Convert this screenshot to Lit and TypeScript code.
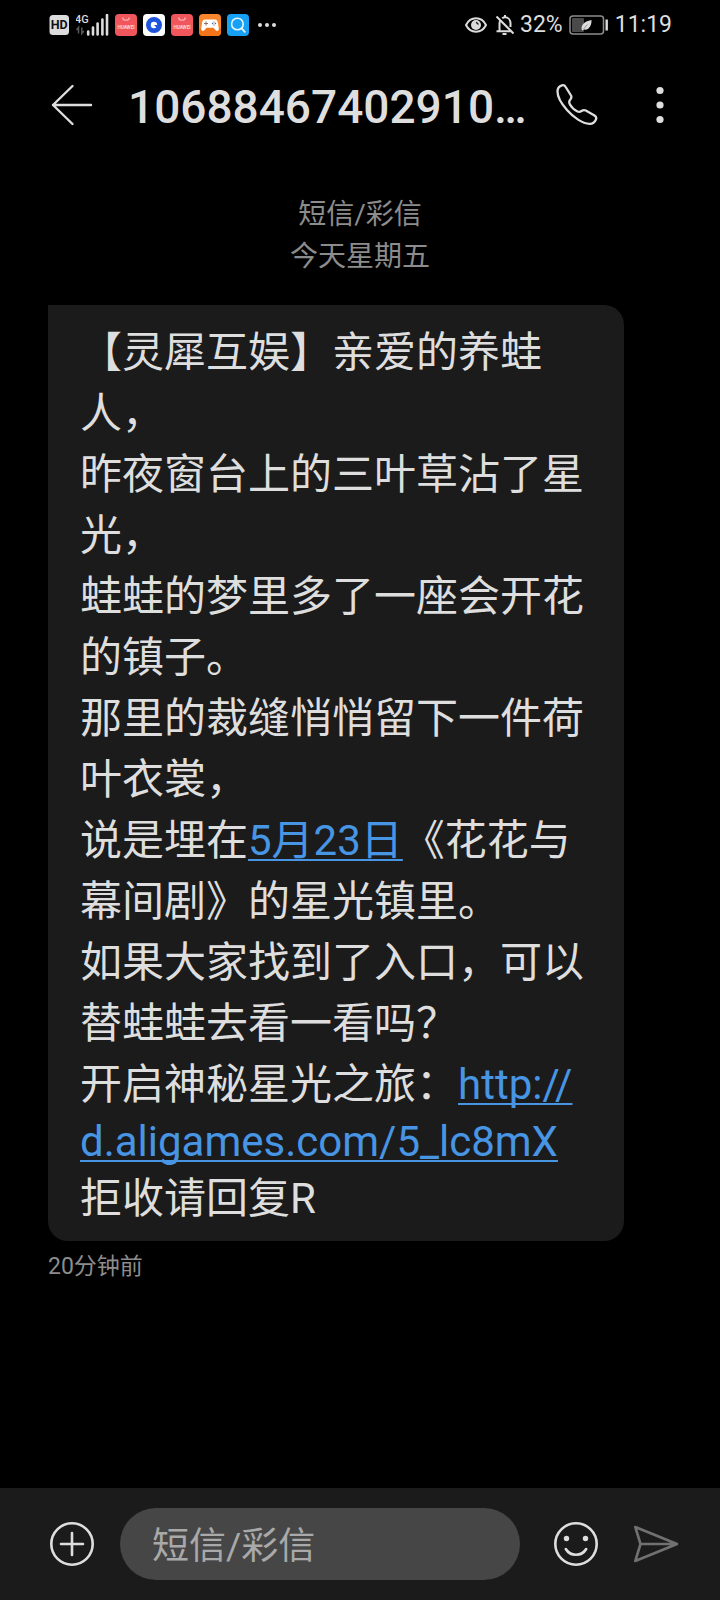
import { LitElement, html, css, svg } from "lit";
import { customElement } from "lit/decorators.js";

const storeIcon = svg`
  <rect width="22" height="22" rx="4" fill="#f0565c"></rect>
  <path d="M7.500 3.500a3.600 3.600 0 0 0 7 0" fill="none" stroke="#ffb3b0" stroke-width="1.200"></path>
  <text x="11" y="14.500" text-anchor="middle" font-size="4.600" font-weight="700" fill="#ffd6d4">HUAWEI</text>`;

const browserIcon = svg`
  <rect width="22" height="22" rx="4" fill="#fff"></rect>
  <circle cx="11" cy="11" r="5.600" fill="none" stroke="#1f55dd" stroke-width="4.800"></circle>
  <path d="M11 11h3.400v3.400z" fill="#1f55dd"></path>`;

const gameIcon = svg`
  <rect width="22" height="22" rx="4" fill="#f8862c"></rect>
  <path d="M0 14h22v4a4 4 0 0 1-4 4H4a4 4 0 0 1-4-4z" fill="#f4741a"></path>
  <path d="M6 5.500h10c2 0 2.600 1.400 3 4l.8 5c.3 2.600-2 3.200-3.400 1.600l-2-2.400H7.600l-2 2.400c-1.400 1.600-3.700 1-3.400-1.600l.8-5c.4-2.600 1-4 3-4z" fill="#fff"></path>
  <path d="M5 9.500h4M7 7.500v4" stroke="#8a7466" stroke-width="1"></path>
  <circle cx="13.600" cy="9.500" r=".8" fill="#3a6fb0"></circle>
  <circle cx="16.400" cy="9.500" r=".8" fill="#c04a3a"></circle>
  <circle cx="15" cy="8.100" r=".7" fill="#8a7466"></circle>
  <circle cx="15" cy="10.900" r=".7" fill="#8a7466"></circle>`;

const searchIcon = svg`
  <rect width="22" height="22" rx="4" fill="#18a0f4"></rect>
  <circle cx="10.400" cy="10" r="5.800" fill="none" stroke="#e4f5ff" stroke-width="1.600"></circle>
  <path d="M14.600 14.400l3.200 3.400" stroke="#e4f5ff" stroke-width="1.800" stroke-linecap="round"></path>`;

const notificationIcons = [storeIcon, browserIcon, storeIcon, gameIcon, searchIcon];

@customElement("status-bar")
class StatusBar extends LitElement {
  static styles = css`
    :host {
      display: flex;
      justify-content: space-between;
      align-items: center;
      height: 50px;
      padding: 0 48px;
      color: #dedede;
      font-size: 23px;
      line-height: 28px;
    }
    svg {
      display: block;
      flex: none;
      font-family: Roboto, sans-serif;
    }
    .side {
      display: flex;
      align-items: center;
    }
    .apps {
      display: flex;
      gap: 6px;
      margin: 0 8px 0 6px;
    }
    .signal {
      margin-left: 6px;
    }
    .bell {
      margin-left: 8px;
    }
    .percent {
      margin-left: 5px;
    }
    .battery {
      margin: 0 6px;
    }
  `;

  render() {
    return html`
      <div class="side">
        <svg width="22" height="22" viewBox="0 0 22 22">
          <rect x="1.500" y="1" width="19.500" height="20" rx="3.500" fill="#dcdcdc"></rect>
          <text x="11.200" y="15.400" text-anchor="middle" font-size="12.500" font-weight="700" fill="#111">HD</text>
        </svg>
        <svg class="signal" width="33" height="22" viewBox="0 0 33 22">
          <text x="-1" y="9" font-size="11" font-weight="500" fill="#dcdcdc">4G</text>
          <path d="M2.500 19.500v-6l-2 2.400M5.800 13.500v6l2-2.400" fill="none" stroke="#555" stroke-width="1.600"></path>
          <path d="M12.200 20.500v-3M17 20.500v-7M21.600 20.500v-11M26.400 20.500v-15M31 20.500V1" stroke="#dcdcdc" stroke-width="2.600" stroke-linecap="round"></path>
        </svg>
        <div class="apps">
          ${notificationIcons.map(
            (icon) => html`<svg width="22" height="22" viewBox="0 0 22 22">${icon}</svg>`
          )}
        </div>
        <svg width="20" height="6" viewBox="0 0 20 6" fill="#dcdcdc">
          <circle cx="3" cy="3" r="2"></circle>
          <circle cx="10" cy="3" r="2"></circle>
          <circle cx="17" cy="3" r="2"></circle>
        </svg>
      </div>
      <div class="side">
        <svg width="22" height="22" viewBox="0 0 22 22">
          <path d="M1 11c4.500-9 15.500-9 20 0c-4.500 9-15.500 9-20 0z" fill="none" stroke="#dcdcdc" stroke-width="2"></path>
          <circle cx="11" cy="11" r="5" fill="#dcdcdc"></circle>
          <path d="M11.500 8.500l1.500 1.500" stroke="#222" stroke-width="1.400" stroke-linecap="round"></path>
        </svg>
        <svg class="bell" width="20" height="22" viewBox="0 0 20 22">
          <path d="M4.500 17V9.500c0-1.300.4-2.400 1-3.300M7.200 4.300C8 3.700 9 3.300 10 3.300c3.200 0 5.500 2.700 5.500 6V13M10 3.300V1M1.500 17.300h14" fill="none" stroke="#dcdcdc" stroke-width="2"></path>
          <path d="M7.500 20h4" stroke="#dcdcdc" stroke-width="2"></path>
          <path d="M1.500 2.500L18.500 19.500" stroke="#dcdcdc" stroke-width="2"></path>
        </svg>
        <span class="percent">32%</span>
        <svg class="battery" width="40" height="20" viewBox="0 0 40 20">
          <rect x="1" y="1" width="33.500" height="18" rx="3" fill="none" stroke="#8c8c8c" stroke-width="1.500"></rect>
          <rect x="3" y="3" width="12" height="14" rx="1" fill="#4a4a4a"></rect>
          <path d="M13 15.500c-1.500-5 1.500-9 9.500-10.500c.3 6-3 10.500-7.500 9.500z" fill="#dcdcdc"></path>
          <path d="M14.500 14l4-4.500" stroke="#777" stroke-width=".7"></path>
          <path d="M37.700 4.500v11" stroke="#dcdcdc" stroke-width="2.400"></path>
        </svg>
        <span>11:19</span>
      </div>
    `;
  }
}

@customElement("chat-header")
class ChatHeader extends LitElement {
  static styles = css`
    :host {
      display: flex;
      align-items: center;
      height: 110px;
      padding: 0 40px 0 50px;
      color: #dedede;
    }
    button {
      display: block;
      flex: none;
      padding: 0;
      border: 0;
      background: none;
      color: inherit;
    }
    svg {
      display: block;
    }
    .title {
      flex: 1;
      min-width: 0;
      margin: 0 24px 0 34px;
      padding-top: 4px;
      overflow: hidden;
      white-space: nowrap;
      font-size: 46px;
      line-height: 56px;
      font-weight: 500;
    }
    .more {
      margin-left: 42px;
    }
  `;

  render() {
    return html`
      <button aria-label="返回">
        <svg width="44" height="44" viewBox="0 0 44 44" fill="none" stroke="currentColor" stroke-width="2.400" stroke-linecap="round" stroke-linejoin="round">
          <path d="M41 22H3M22.500 3L3 22l19.500 19"></path>
        </svg>
      </button>
      <h1 class="title">10688467402910…</h1>
      <button aria-label="拨打电话">
        <svg width="42" height="42" viewBox="0 0 42 42" fill="none" stroke="currentColor" stroke-width="2.300" stroke-linejoin="round">
          <path d="M1.500 7.500C1.500 4 3.500 2 6 1.300C7.800 .9 9 1.700 9.700 3L15 11.500C15.800 13 15.600 13.800 14.500 15.200C12.800 17 12.800 18.300 13.800 20.200C15.500 23.300 18.500 26 21.500 27.500C23 28.200 24 28 25.500 27C27 26 28.300 25.800 29.800 26.500L38.500 31.500C40.300 32.600 40.700 34 39.800 35.800C38.500 38.700 36.500 40 33.500 39.800C26.500 39.500 17.500 33.500 11 26C5.500 19.800 1.500 12.500 1.500 7.500Z"></path>
        </svg>
      </button>
      <button class="more" aria-label="更多">
        <svg width="40" height="44" viewBox="0 0 40 44" fill="currentColor">
          <circle cx="20" cy="7.500" r="3.600"></circle>
          <circle cx="20" cy="22" r="3.600"></circle>
          <circle cx="20" cy="36.500" r="3.600"></circle>
        </svg>
      </button>
    `;
  }
}

@customElement("message-bubble")
class MessageBubble extends LitElement {
  static styles = css`
    :host {
      display: block;
      margin: 27px 96px 0 48px;
    }
    .bubble {
      padding: 17px 32px 12px;
      border-radius: 0 20px 20px 20px;
      background: #1b1b1b;
      color: #dedede;
      font-size: 42px;
      line-height: 53px;
      text-spacing-trim: space-all;
    }
    p {
      margin: 0;
    }
    .han {
      line-height: 61px;
    }
    a {
      color: #4795e3;
      text-decoration: underline 2px;
      text-underline-offset: 4px;
      text-decoration-skip-ink: none;
    }
    .time {
      display: block;
      margin-top: 10px;
      color: #8c8c8c;
      font-size: 23px;
      line-height: 32px;
    }
  `;

  render() {
    return html`
      <div class="bubble">
        <p class="han">【灵犀互娱】亲爱的养蛙人，</p>
        <p class="han">昨夜窗台上的三叶草沾了星光，</p>
        <p class="han">蛙蛙的梦里多了一座会开花的镇子。</p>
        <p class="han">那里的裁缝悄悄留下一件荷叶衣裳，</p>
        <p class="han">说是埋在<a href="#date">5月23日</a>《花花与幕间剧》的星光镇里。</p>
        <p class="han">如果大家找到了入口，可以替蛙蛙去看一看吗？</p>
        <p><span class="han">开启神秘星光之旅：</span><a href="http://d.aligames.com/5_lc8mX">http://<wbr>d.aligames.com/5_lc8mX</a></p>
        <p class="han">拒收请回复R</p>
      </div>
      <time class="time">20分钟前</time>
    `;
  }
}

@customElement("message-composer")
class MessageComposer extends LitElement {
  static styles = css`
    :host {
      display: flex;
      align-items: center;
      height: 112px;
      padding: 0 40px 0 48px;
      background: #1b1b1b;
      color: #dedede;
    }
    button {
      display: block;
      flex: none;
      padding: 0;
      border: 0;
      background: none;
      color: inherit;
    }
    svg {
      display: block;
    }
    .field {
      flex: 1;
      min-width: 0;
      box-sizing: border-box;
      height: 72px;
      margin: 0 32px 0 24px;
      padding: 5px 32px 0;
      border: 0;
      border-radius: 36px;
      outline: 0;
      background: #464646;
      color: #dedede;
      font-family: inherit;
      font-size: 37px;
    }
    .field::placeholder {
      color: #a9a9a9;
      opacity: 1;
    }
    .send {
      margin-left: 32px;
      color: #717171;
    }
  `;

  render() {
    return html`
      <button aria-label="添加">
        <svg width="48" height="48" viewBox="0 0 48 48" fill="none" stroke="currentColor" stroke-width="2.600" stroke-linecap="round">
          <circle cx="24" cy="24" r="20.700"></circle>
          <path d="M24 13v22M13 24h22"></path>
        </svg>
      </button>
      <input class="field" type="text" placeholder="短信/彩信" aria-label="短信/彩信" />
      <button aria-label="表情">
        <svg width="48" height="48" viewBox="0 0 48 48" fill="none" stroke="currentColor" stroke-width="2.600" stroke-linecap="round">
          <circle cx="24" cy="24" r="20.700"></circle>
          <path d="M13.800 29c4.500 7.700 15.900 7.700 20.400 0"></path>
          <g fill="currentColor" stroke="none">
            <circle cx="14.500" cy="18.500" r="2.700"></circle>
            <circle cx="33.500" cy="18.500" r="2.700"></circle>
          </g>
        </svg>
      </button>
      <button class="send" aria-label="发送">
        <svg width="48" height="48" viewBox="0 0 48 48" fill="none" stroke="currentColor" stroke-width="2.600" stroke-linejoin="round">
          <path d="M3.300 7L45 24L3.300 41L8.500 24zM8.500 24H45"></path>
        </svg>
      </button>
    `;
  }
}

@customElement("app-root")
class AppRoot extends LitElement {
  static styles = css`
    :host {
      display: flex;
      flex-direction: column;
      min-height: 100vh;
      background: #000;
      font-family: Roboto, "Noto Sans CJK SC", sans-serif;
    }
    .thread {
      flex: 1;
      padding-top: 34px;
    }
    .day {
      margin: 0;
      color: #8c8c8c;
      font-size: 28px;
      line-height: 42px;
      text-align: center;
    }
  `;

  render() {
    return html`
      <status-bar></status-bar>
      <chat-header></chat-header>
      <main class="thread" lang="zh-CN">
        <p class="day">短信/彩信<br />今天星期五</p>
        <message-bubble></message-bubble>
      </main>
      <message-composer lang="zh-CN"></message-composer>
    `;
  }
}
